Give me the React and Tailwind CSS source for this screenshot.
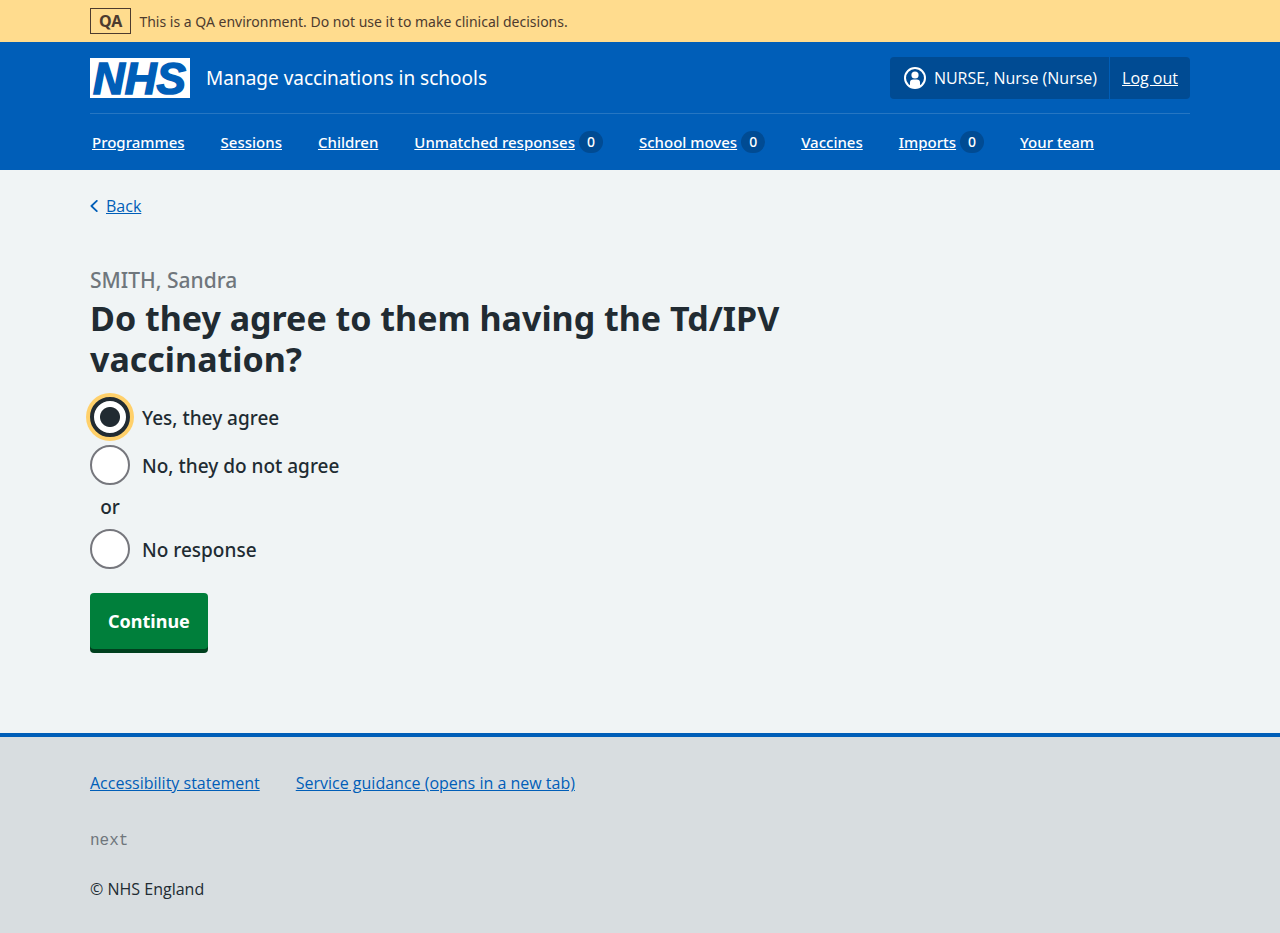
const navItems = [
  { label: 'Programmes' },
  { label: 'Sessions' },
  { label: 'Children' },
  { label: 'Unmatched responses', count: 0 },
  { label: 'School moves', count: 0 },
  { label: 'Vaccines' },
  { label: 'Imports', count: 0 },
  { label: 'Your team' },
]

function Container({ className = '', children }) {
  return <div className={`mx-auto w-full max-w-[1132px] px-4 ${className}`}>{children}</div>
}

function Logo() {
  return (
    <svg viewBox="0 0 100 40" className="h-10 w-[100px] shrink-0 overflow-visible" role="img" aria-label="NHS">
      <rect width="100" height="40" fill="#fff" />
      <text x="3" y="36" fontSize="44" fontWeight="700" fontStyle="italic" fontFamily="Liberation Sans, Arial, sans-serif" fill="#005eb8" stroke="#005eb8" strokeWidth="1.6">NHS</text>
    </svg>
  )
}

function AccountIcon() {
  return (
    <svg viewBox="0 0 24 24" className="size-6 shrink-0" aria-hidden="true">
      <circle cx="13" cy="12" r="10" fill="none" stroke="#fff" strokeWidth="2" />
      <circle cx="13" cy="9" r="3.6" fill="#fff" />
      <path d="M8 20.5V16.6a3.2 3.2 0 0 1 3.2-3.2h3.6a3.2 3.2 0 0 1 3.2 3.2v3.9a10 10 0 0 1-5 1.5 10 10 0 0 1-5-1.5z" fill="#fff" />
    </svg>
  )
}

function Radio({ id, label, defaultChecked }) {
  return (
    <div className="flex h-10 items-center gap-3">
      <input
        id={id}
        type="radio"
        name="response"
        defaultChecked={defaultChecked}
        className="size-10 shrink-0 appearance-none rounded-full border-2 border-[#76777d] bg-white outline-none checked:border-4 checked:border-[#212b32] checked:bg-[radial-gradient(circle,#212b32_9.5px,#fff_10.5px)] checked:ring-4 checked:ring-[#ffd06a]"
      />
      <label htmlFor={id} className="pt-[2px] text-[19px] leading-7">{label}</label>
    </div>
  )
}

export default function App() {
  return (
    <div className="flex min-h-screen flex-col bg-[#f0f4f5] font-['Noto_Sans','Open_Sans',sans-serif] text-base leading-6 text-[#212b32]">
      <div className="bg-[#ffdc8e] py-2 text-[#4d3b2e]">
        <Container className="flex items-center gap-2">
          <strong className="border border-current px-2 text-base leading-6 font-bold">QA</strong>
          <span className="pt-[2px] text-sm">This is a QA environment. Do not use it to make clinical decisions.</span>
        </Container>
      </div>

      <header className="bg-[#005eb8] text-white">
        <Container>
          <div className="flex items-center justify-between border-b border-white/15 pt-[15px] pb-[14px]">
            <div className="flex items-center gap-4">
              <Logo />
              <span className="text-[19px]">Manage vaccinations in schools</span>
            </div>
            <div className="flex h-[42px] items-stretch divide-x divide-[#005eb8] rounded bg-[#004b93] font-['Open_Sans',sans-serif]">
              <span className="flex items-center gap-2 px-3"><AccountIcon />NURSE, Nurse (Nurse)</span>
              <span className="flex items-center px-3"><a href="#logout" className="underline">Log out</a></span>
            </div>
          </div>
          <nav aria-label="Menu" className="text-[15px] font-medium">
            <ul className="flex h-14 items-center gap-9 px-[2px]">
              {navItems.map(({ label, count }) => (
                <li key={label} className="flex items-center gap-1 whitespace-nowrap">
                  <a href="#nav" className="underline">{label}</a>
                  {count !== undefined && (
                    <span className="flex h-[22px] w-6 items-center justify-center rounded-full bg-[#004b93] text-sm">{count}</span>
                  )}
                </li>
              ))}
            </ul>
          </nav>
        </Container>
      </header>

      <main className="grow pb-20">
        <Container>
          <a href="#back" className="mt-6 flex w-fit items-center gap-2 font-['Open_Sans',sans-serif] text-[#005eb8]">
            <svg viewBox="0 0 8 12" className="h-3 w-2" fill="none" stroke="currentColor" strokeWidth="1.8" strokeLinecap="round" strokeLinejoin="round" aria-hidden="true"><path d="M6.8.9 1.4 6l5.4 5.1" /></svg>
            <span className="underline">Back</span>
          </a>
          <form className="mt-12 max-w-[720px] font-medium" onSubmit={(e) => e.preventDefault()}>
            <fieldset>
              <legend>
                <span className="block pt-px pb-[5px] text-[21px] leading-[26px] text-[#6f767c]">SMITH, Sandra</span>
                <h1 className="text-[34px] leading-[41px] font-bold">Do they agree to them having the Td/IPV vaccination?</h1>
              </legend>
              <div className="mt-[17px] flex flex-col gap-2">
                <Radio id="yes" label="Yes, they agree" defaultChecked />
                <Radio id="no" label="No, they do not agree" />
                <div className="w-10 text-center text-[19px] leading-7">or</div>
                <Radio id="none" label="No response" />
              </div>
            </fieldset>
            <button type="submit" className="mt-6 mb-1 block h-14 rounded bg-[#007f3b] px-[18px] text-lg font-bold text-white shadow-[0_4px_0_#00401e]">Continue</button>
          </form>
        </Container>
      </main>

      <footer className="border-t-4 border-[#005eb8] bg-[#d8dde0] pt-[34px] pb-8 font-['Open_Sans',sans-serif]">
        <Container>
          <div className="flex gap-9 text-[#005eb8]">
            <a href="#accessibility" className="underline">Accessibility statement</a>
            <a href="#guidance" className="underline">Service guidance (opens in a new tab)</a>
          </div>
          <p className="mt-[34px] font-['Liberation_Mono',monospace] text-[#6f767c]">next</p>
          <p className="mt-6">© NHS England</p>
        </Container>
      </footer>
    </div>
  )
}
